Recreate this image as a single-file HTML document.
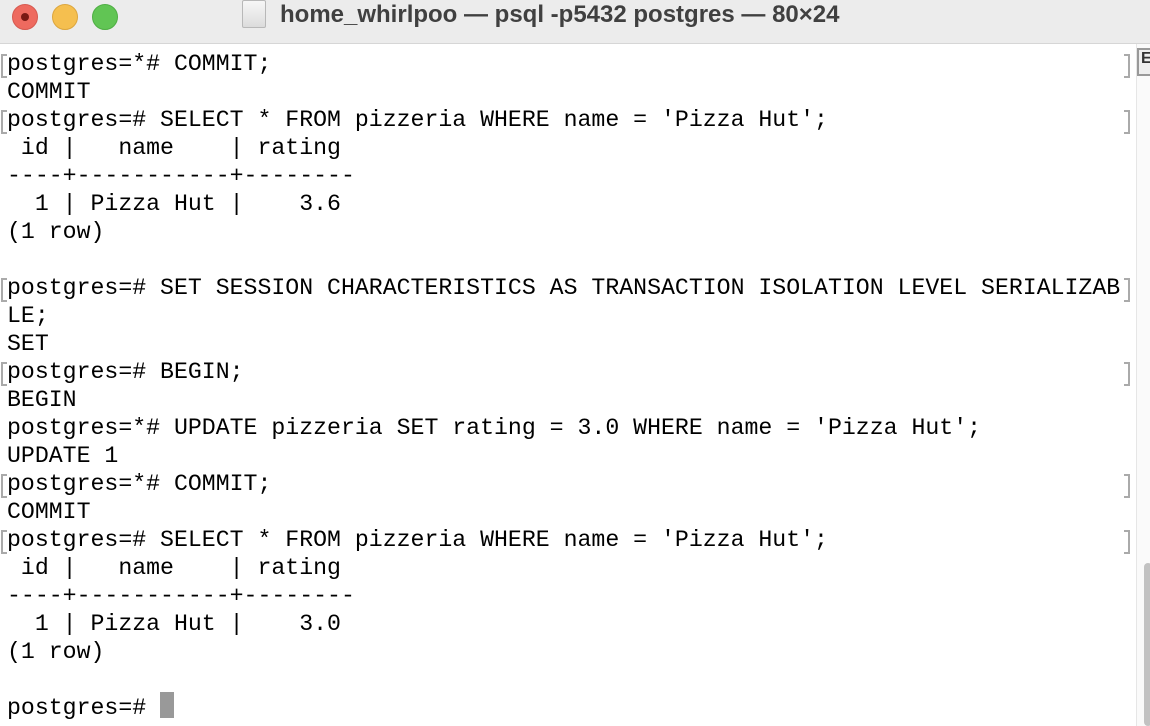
<!DOCTYPE html>
<html><head><style>
html,body{margin:0;padding:0;width:1150px;height:726px;overflow:hidden;background:#fff}
.tb{position:absolute;left:0;top:0;width:1150px;height:43px;background:#ececec;border-bottom:1px solid #d6d6d6}
.dot{position:absolute;top:4px;width:24px;height:24px;border-radius:50%}
.title{position:absolute;left:280px;top:0px;font:bold 24px "Liberation Sans",sans-serif;color:#404040;line-height:30px}
.doc{position:absolute;left:242px;top:0px;width:22px;height:26px;background:linear-gradient(#f7f7f7,#dcdcdc);border:1px solid #b8b8b8;border-radius:2px}
.term{position:absolute;left:7px;top:50px;font-family:"Liberation Mono",monospace;font-size:23.2px;line-height:28px;color:#000;white-space:pre}
.lb{position:absolute;left:1px;width:4px;height:20px;border:2px solid #aaa;border-right:none}
.rb{position:absolute;left:1124px;width:4px;height:20px;border:2px solid #aaa;border-left:none}
.sb{position:absolute;left:1136px;top:44px;width:14px;height:682px;background:#fafafa;border-left:1px solid #e6e6e6}
.th{position:absolute;left:1144px;top:563px;width:8px;height:163px;background:#c2c2c2;border-radius:4px}
.cur{position:absolute;left:160px;top:692px;width:14px;height:26px;background:#999}
</style></head><body>
<div class="tb">
<div class="dot" style="left:12px;background:#ee6a5f;border:1px solid #d65a50"><div style="position:absolute;left:8px;top:8px;width:8px;height:8px;border-radius:50%;background:#7a1a14"></div></div>
<div class="dot" style="left:52px;background:#f5bf4f;border:1px solid #dca63e"></div>
<div class="dot" style="left:92px;background:#61c554;border:1px solid #4fae44"></div>
<div class="doc"></div>
<div class="title">home_whirlpoo — psql -p5432 postgres — 80×24</div>
</div>
<div class="sb"></div><div class="th"></div>
<div style="position:absolute;left:1137px;top:48px;width:13px;height:24px;border:2px solid #999;border-right:none;background:#eee"><span style="font:bold 16px 'Liberation Sans';color:#333;margin-left:2px">E</span></div>
<div class="lb" style="top:54px"></div><div class="rb" style="top:54px"></div>
<div class="lb" style="top:110px"></div><div class="rb" style="top:110px"></div>
<div class="lb" style="top:278px"></div><div class="rb" style="top:278px"></div>
<div class="lb" style="top:362px"></div><div class="rb" style="top:362px"></div>
<div class="lb" style="top:474px"></div><div class="rb" style="top:474px"></div>
<div class="lb" style="top:530px"></div><div class="rb" style="top:530px"></div>
<div class="term">postgres=*# COMMIT;
COMMIT
postgres=# SELECT * FROM pizzeria WHERE name = 'Pizza Hut';
 id |   name    | rating
----+-----------+--------
  1 | Pizza Hut |    3.6
(1 row)

postgres=# SET SESSION CHARACTERISTICS AS TRANSACTION ISOLATION LEVEL SERIALIZAB
LE;
SET
postgres=# BEGIN;
BEGIN
postgres=*# UPDATE pizzeria SET rating = 3.0 WHERE name = 'Pizza Hut';
UPDATE 1
postgres=*# COMMIT;
COMMIT
postgres=# SELECT * FROM pizzeria WHERE name = 'Pizza Hut';
 id |   name    | rating
----+-----------+--------
  1 | Pizza Hut |    3.0
(1 row)

postgres=# </div>
<div class="cur"></div>
</body></html>
